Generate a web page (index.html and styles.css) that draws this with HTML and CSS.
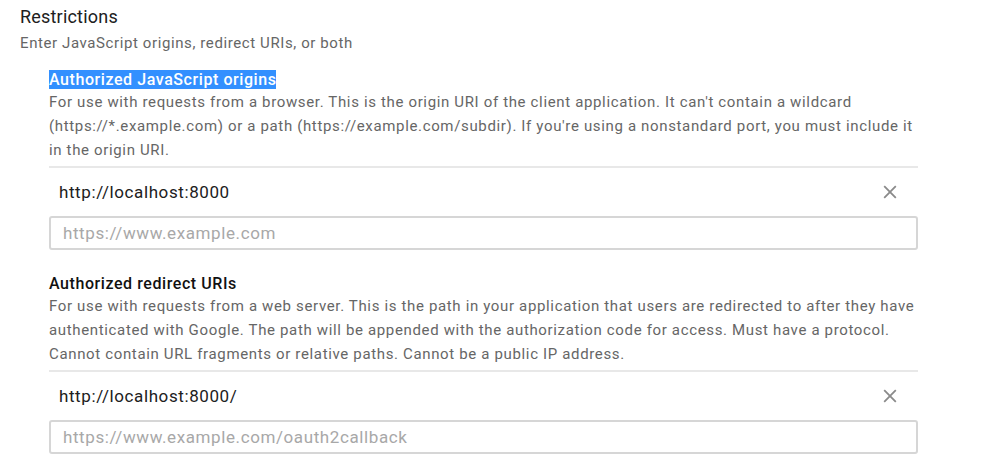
FILE: index.html
```html
<!DOCTYPE html>
<html>
<head>
<meta charset="utf-8">
<link rel="stylesheet" href="styles.css">
</head>
<body>
<div class="page">
  <div class="title">Restrictions</div>
  <div class="subtitle">Enter JavaScript origins, redirect URIs, or both</div>
  <div class="section">
    <div class="sec-title"><span class="selected">Authorized JavaScript origins</span></div>
    <div class="desc">For use with requests from a browser. This is the origin URI of the client application. It can't contain a wildcard (https://*.example.com) or a path (https://example.com/subdir). If you're using a nonstandard port, you must include it in the origin URI.</div>
    <div class="list">
      <div class="item">
        <span class="item-text">http://localhost:8000</span>
        <svg class="close" width="14" height="14" viewBox="0 0 14 14"><path d="M1.2 1.2 L12.8 12.8 M12.8 1.2 L1.2 12.8" stroke="#8a8a8a" stroke-width="1.8" fill="none"/></svg>
      </div>
      <div class="input"><span class="placeholder">https://www.example.com</span></div>
    </div>
  </div>
  <div class="section second">
    <div class="sec-title">Authorized redirect URIs</div>
    <div class="desc">For use with requests from a web server. This is the path in your application that users are redirected to after they have authenticated with Google. The path will be appended with the authorization code for access. Must have a protocol. Cannot contain URL fragments or relative paths. Cannot be a public IP address.</div>
    <div class="list">
      <div class="item">
        <span class="item-text">http://localhost:8000/</span>
        <svg class="close" width="14" height="14" viewBox="0 0 14 14"><path d="M1.2 1.2 L12.8 12.8 M12.8 1.2 L1.2 12.8" stroke="#8a8a8a" stroke-width="1.8" fill="none"/></svg>
      </div>
      <div class="input"><span class="placeholder">https://www.example.com/oauth2callback</span></div>
    </div>
  </div>
</div>
</body>
</html>
```
FILE: styles.css
```css
html, body {
  margin: 0;
  padding: 0;
  background: #fff;
}
body {
  font-family: Roboto, "Noto Sans", sans-serif;
  color: #212121;
}
.page {
  padding: 5px 0 0 20px;
  width: 900px;
}
.title {
  font-size: 18px;
  line-height: 24px;
  letter-spacing: 0.2px;
  color: #202020;
}
.subtitle {
  font-size: 15px;
  line-height: 24px;
  letter-spacing: 0.6px;
  color: #666;
  margin-top: 2px;
}
.section {
  margin-left: 29px;
  margin-top: 15px;
  width: 869px;
}
.section.second {
  margin-top: 24px;
}
.sec-title {
  font-size: 16px;
  font-weight: 500;
  line-height: 20px;
  letter-spacing: 0.57px;
  color: #111;
}
.selected {
  background: #3390ff;
  color: #fff;
}
.desc {
  font-size: 15px;
  line-height: 24px;
  letter-spacing: 0.65px;
  color: #666;
}
.list {
  margin-top: 4px;
  border-top: 2px solid #e8e8e8;
}
.item {
  display: flex;
  align-items: center;
  justify-content: space-between;
  height: 48px;
  padding: 0 21px 0 10px;
}
.item-text {
  font-size: 17px;
  letter-spacing: 0.6px;
  color: #202020;
}
.close {
  display: block;
}
.input {
  height: 30px;
  border: 2px solid #d6d6d6;
  border-radius: 3px;
  display: flex;
  align-items: center;
  padding-left: 12px;
}
.placeholder {
  font-size: 17px;
  letter-spacing: 0.6px;
  color: #a8a8a8;
}
```
